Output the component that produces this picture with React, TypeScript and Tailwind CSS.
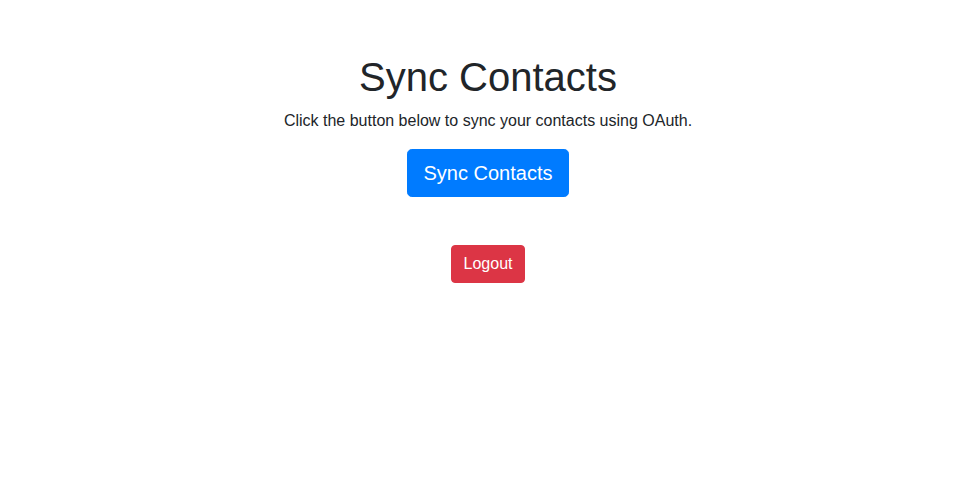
export default function App() {
  return (
    <div
      className="w-full min-h-[498px] bg-white text-[#212529]"
      style={{ fontFamily: '"Liberation Sans", Arial, sans-serif' }}
    >
      <div className="pt-[53px] pl-[23px] flex flex-col items-center text-center">
        <h1 className="text-[40px] leading-[48px] font-medium mb-2">Sync Contacts</h1>
        <p className="text-base leading-6 mb-4">
          Click the button below to sync your contacts using OAuth.
        </p>
        <button className="bg-[#007bff] text-white text-[20px] leading-[30px] px-4 py-2 border border-[#007bff] rounded-[4.8px]">
          Sync Contacts
        </button>
        <button className="mt-12 bg-[#dc3545] text-white text-base leading-6 px-3 py-1.5 border border-[#dc3545] rounded">
          Logout
        </button>
      </div>
    </div>
  );
}
